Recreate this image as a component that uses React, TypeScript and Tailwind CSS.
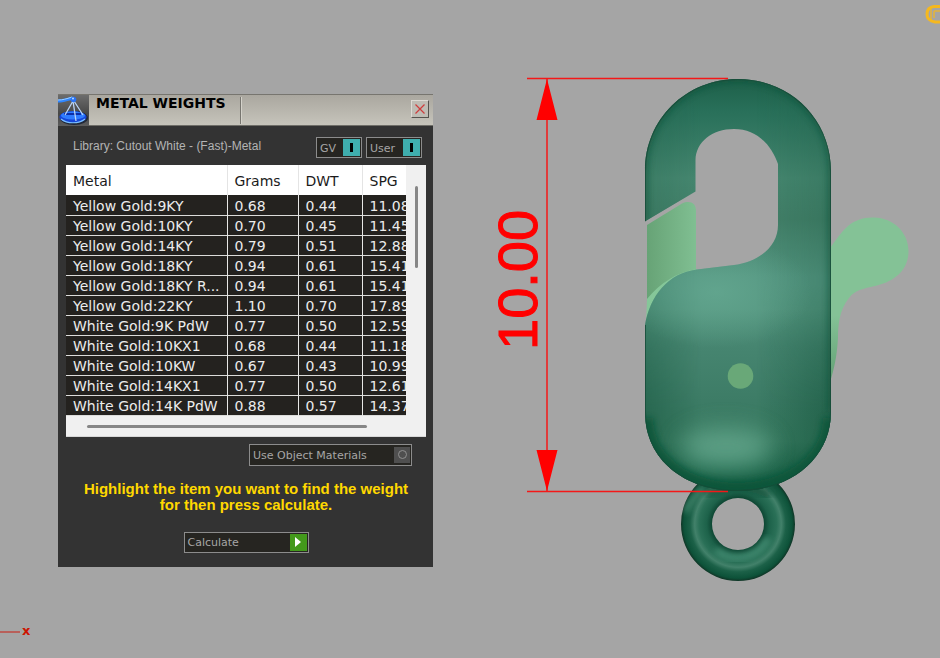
import type { ReactNode } from "react";

type Metal = {
  name: string;
  grams: string;
  dwt: string;
  spg: string;
};

const metals: Metal[] = [
  { name: "Yellow Gold:9KY", grams: "0.68", dwt: "0.44", spg: "11.08" },
  { name: "Yellow Gold:10KY", grams: "0.70", dwt: "0.45", spg: "11.45" },
  { name: "Yellow Gold:14KY", grams: "0.79", dwt: "0.51", spg: "12.88" },
  { name: "Yellow Gold:18KY", grams: "0.94", dwt: "0.61", spg: "15.41" },
  { name: "Yellow Gold:18KY R...", grams: "0.94", dwt: "0.61", spg: "15.41" },
  { name: "Yellow Gold:22KY", grams: "1.10", dwt: "0.70", spg: "17.89" },
  { name: "White Gold:9K PdW", grams: "0.77", dwt: "0.50", spg: "12.59" },
  { name: "White Gold:10KX1", grams: "0.68", dwt: "0.44", spg: "11.18" },
  { name: "White Gold:10KW", grams: "0.67", dwt: "0.43", spg: "10.99" },
  { name: "White Gold:14KX1", grams: "0.77", dwt: "0.50", spg: "12.61" },
  { name: "White Gold:14K PdW", grams: "0.88", dwt: "0.57", spg: "14.37" },
];

function ScaleLogo() {
  return (
    <svg viewBox="0 0 31 31" className="h-[31px] w-[31px] shrink-0" aria-hidden="true">
      <defs>
        <linearGradient id="logoBg" x1="0" y1="0" x2="0" y2="1">
          <stop offset="0" stopColor="#6c6c6c" />
          <stop offset="0.6" stopColor="#474747" />
          <stop offset="1" stopColor="#5c5c5c" />
        </linearGradient>
      </defs>
      <rect width="31" height="31" fill="url(#logoBg)" />
      <ellipse cx="16" cy="23" rx="14" ry="7" fill="#202838" />
      <ellipse cx="15" cy="22" rx="13.5" ry="6" fill="#1646d8" />
      <ellipse cx="15" cy="20.5" rx="12" ry="4" fill="#2f7cff" />
      <path d="M3 24c6 5 18 5 24 0" stroke="#7cc0ff" strokeWidth="1.2" fill="none" />
      <path d="M6 19h17" stroke="#0b2ea8" strokeWidth="2" />
      <path d="M15 6L7 20M15 6l3 20M16 6l9 14" stroke="#b9d4f6" strokeWidth="1.3" fill="none" />
      <path d="M0 6c5 0 8-1 15-3" stroke="#2f86ff" strokeWidth="3" fill="none" />
      <path d="M0 5c5 0 8-1 14-3" stroke="#9fd0ff" strokeWidth="1" fill="none" />
      <circle cx="15.5" cy="4.5" r="2.8" fill="#2a72f5" />
      <circle cx="15" cy="3.5" r="1" fill="#b5dcff" />
    </svg>
  );
}

type BoxButtonProps = {
  label: string;
  className: string;
  pressed?: boolean;
  children: ReactNode;
};

function BoxButton({ label, className, pressed, children }: BoxButtonProps) {
  return (
    <button
      type="button"
      aria-pressed={pressed}
      className={`flex items-center justify-between border border-[#8c8c8c] bg-[#262521] pl-[3px] pr-px text-[11px] leading-4 text-[#a6a6a6] ${className}`}
    >
      <span className="pt-[2px]">{label}</span>
      {children}
    </button>
  );
}

function OnMark() {
  return (
    <span className="flex h-[17px] w-[17px] items-center justify-center bg-[#3faeae]">
      <span className="h-[9px] w-[3px] bg-black" />
    </span>
  );
}

function MetalTable() {
  return (
    <div className="mt-[7px] border-b border-[#d8d8d8] bg-[#f0f0f0]">
      <div className="flex">
        <div className="min-w-0 flex-1 overflow-hidden">
          <table className="w-[384px] table-fixed border-collapse text-[14px]">
            <colgroup>
              <col className="w-[161px]" />
              <col className="w-[71px]" />
              <col className="w-[64px]" />
              <col />
            </colgroup>
            <thead>
              <tr className="h-[30px] bg-white leading-4 text-[#1b1b1b]">
                <th className="border-r border-[#e4e4e4] pl-[7px] pt-[2px] text-left font-normal">Metal</th>
                <th className="border-r border-[#e4e4e4] pl-[7px] pt-[2px] text-left font-normal">Grams</th>
                <th className="border-r border-[#e4e4e4] pl-[7px] pt-[2px] text-left font-normal">DWT</th>
                <th className="pl-[7px] pt-[2px] text-left font-normal">SPG</th>
              </tr>
            </thead>
            <tbody>
              {metals.map((m) => (
                <tr key={m.name} className="h-5 border-b border-[#dcdcda] bg-[#24221f] leading-4 text-[#ececec]">
                  <td className="whitespace-nowrap border-r border-[#e8e8e6] pl-[7px] pt-[2px]">{m.name}</td>
                  <td className="border-r border-[#e8e8e6] pl-[7px] pt-[2px]">{m.grams}</td>
                  <td className="border-r border-[#e8e8e6] pl-[7px] pt-[2px]">{m.dwt}</td>
                  <td className="pl-[7px] pt-[2px]">{m.spg}</td>
                </tr>
              ))}
            </tbody>
          </table>
        </div>
        <div className="flex w-5 justify-center pt-[21px]">
          <div className="h-[82px] w-[3px] rounded-full bg-[#868686]" />
        </div>
      </div>
      <div className="h-5 pl-[21px] pt-[9px]">
        <div className="h-[3px] w-[280px] rounded-full bg-[#868686]" />
      </div>
    </div>
  );
}

function MetalWeights() {
  return (
    <section className="ml-[58px] mt-[94px] w-[375px] shrink-0 self-start bg-[#333333]">
      <header className="flex h-8 items-start border-b border-t border-b-[#6f6e68] border-t-[#77756f] bg-linear-to-b from-[#aaa79f] to-[#c6c4bb]">
        <ScaleLogo />
        <h1 className="whitespace-nowrap pl-[7px] text-[14px] font-bold leading-4 text-black">METAL WEIGHTS</h1>
        <div className="ml-[14px] mt-[2px] h-[27px] w-[2px] border-l border-r border-l-[#77756f] border-r-[#d4d2ca]" />
        <button
          type="button"
          aria-label="Close"
          className="ml-auto mr-[4px] mt-[5px] flex h-[18px] w-[18px] items-center justify-center border border-b-[#55534e] border-l-[#dddbd4] border-r-[#55534e] border-t-[#dddbd4] bg-[#bfbcb4]"
        >
          <svg viewBox="0 0 10 10" className="h-[10px] w-[10px]" aria-hidden="true">
            <path d="M0.5 0.5l9 9M9.5 0.5l-9 9" stroke="#d03c3c" strokeWidth="1.2" />
          </svg>
        </button>
      </header>

      <div className="pb-[14px] pl-2 pr-[7px] pt-[11px]">
        <div className="flex items-start gap-1 pl-[7px] pr-1">
          <p className="mr-auto whitespace-nowrap pt-px font-['Liberation_Sans'] text-xs leading-4 text-[#b4b4b4]">
            Library: Cutout White - (Fast)-Metal
          </p>
          <BoxButton label="GV" pressed className="h-[21px] w-[46px]">
            <OnMark />
          </BoxButton>
          <BoxButton label="User" pressed className="h-[21px] w-[56px]">
            <OnMark />
          </BoxButton>
        </div>

        <MetalTable />

        <div className="mt-[7px] flex justify-end pr-[14px]">
          <BoxButton label="Use Object Materials" pressed={false} className="h-[22px] w-[163px]">
            <span className="flex h-4 w-4 items-center justify-center bg-[#4f4f4f]">
              <span className="h-[9px] w-[9px] rounded-full border border-[#909090]" />
            </span>
          </BoxButton>
        </div>

        <p className="mt-[15px] text-center font-['Liberation_Sans'] text-[15px] font-bold leading-4 text-[#ffd800]">
          Highlight the item you want to find the weight
          <br />
          for then press calculate.
        </p>

        <div className="mt-[19px] flex justify-center">
          <BoxButton label="Calculate" className="h-[21px] w-[125px]">
            <span className="flex h-[17px] w-[17px] items-center justify-center bg-[#43991b]">
              <svg viewBox="0 0 6 10" className="h-[10px] w-[6px]" aria-hidden="true">
                <path d="M0 0l6 5-6 5z" fill="#fff" />
              </svg>
            </span>
          </BoxButton>
        </div>
      </div>
    </section>
  );
}

const BODY =
  "M645 221.5L695.5 191.5V160C696 142 712 129 734 129C756 129 771 144 778 164V225C778 247 758 262 734 265L697 269.5C668 273 650 296 645 325V412C645 460 685 491 738 491C791 491 831 458 831 412V171C831 119 790 79 738 79C686 79 645 119 645 171Z";

function ClaspModel() {
  return (
    <svg
      viewBox="433 0 507 600"
      preserveAspectRatio="xMinYMin meet"
      className="h-[600px] min-w-0 flex-1"
      role="img"
      aria-label="Lobster clasp with height dimension"
    >
      <defs>
        <linearGradient id="body" gradientUnits="userSpaceOnUse" x1="0" y1="79" x2="0" y2="491">
          <stop offset="0" stopColor="#1d6049" />
          <stop offset="0.08" stopColor="#29705a" />
          <stop offset="0.24" stopColor="#468770" />
          <stop offset="0.34" stopColor="#438069" />
          <stop offset="0.48" stopColor="#549580" />
          <stop offset="0.56" stopColor="#54957f" />
          <stop offset="0.65" stopColor="#468570" />
          <stop offset="0.78" stopColor="#3d7c66" />
          <stop offset="0.88" stopColor="#387a60" />
          <stop offset="0.95" stopColor="#1e664b" />
          <stop offset="1" stopColor="#0a5238" />
        </linearGradient>
        <linearGradient id="side" gradientUnits="userSpaceOnUse" x1="645" y1="0" x2="831" y2="0">
          <stop offset="0" stopColor="#14543c" stopOpacity="0.5" />
          <stop offset="0.3" stopColor="#14543c" stopOpacity="0" />
          <stop offset="0.6" stopColor="#14543c" stopOpacity="0" />
          <stop offset="1" stopColor="#14543c" stopOpacity="0.6" />
        </linearGradient>
        <linearGradient id="fade" x1="0" y1="0" x2="0" y2="1">
          <stop offset="0" stopColor="#fff" stopOpacity="0.4" />
          <stop offset="0.5" stopColor="#fff" stopOpacity="0.4" />
          <stop offset="0.8" stopColor="#fff" />
        </linearGradient>
        <mask id="sideMask">
          <rect x="645" y="79" width="186" height="412" fill="url(#fade)" />
        </mask>
        <radialGradient id="glow">
          <stop offset="0" stopColor="#6bb098" stopOpacity="0.8" />
          <stop offset="1" stopColor="#6bb098" stopOpacity="0" />
        </radialGradient>
        <linearGradient id="gate" x1="0" y1="0" x2="1" y2="0">
          <stop offset="0" stopColor="#67a376" />
          <stop offset="1" stopColor="#80bf92" />
        </linearGradient>
        <linearGradient id="lever" x1="0" y1="0" x2="0" y2="1">
          <stop offset="0.6" stopColor="#84c296" />
          <stop offset="1" stopColor="#63a074" />
        </linearGradient>
        <radialGradient id="ring" gradientUnits="userSpaceOnUse" cx="738" cy="524" r="57">
          <stop offset="0.45" stopColor="#0d4532" />
          <stop offset="0.55" stopColor="#1d624a" />
          <stop offset="0.68" stopColor="#2a7057" />
          <stop offset="0.76" stopColor="#42816a" />
          <stop offset="0.84" stopColor="#1c6148" />
          <stop offset="0.95" stopColor="#0d5239" />
          <stop offset="1" stopColor="#103526" />
        </radialGradient>
        <filter id="soft" x="-20%" y="-20%" width="140%" height="140%">
          <feGaussianBlur stdDeviation="3" />
        </filter>
        <filter id="softer" x="-60%" y="-90%" width="220%" height="280%">
          <feGaussianBlur stdDeviation="12" />
        </filter>
        <clipPath id="bodyClip">
          <path d={BODY} />
        </clipPath>
        <clipPath id="ringClip">
          <path
            clipRule="evenodd"
            d="M681 524a57 57 0 1 0 114 0a57 57 0 1 0-114 0ZM712 524a26 26 0 1 0 52 0a26 26 0 1 0-52 0Z"
          />
        </clipPath>
      </defs>

      {/* jump ring */}
      <g clipPath="url(#ringClip)">
        <rect x="681" y="467" width="114" height="114" fill="url(#ring)" />
        <path d="M716 550A34 34 0 0 0 768 538" stroke="#57a086" strokeWidth="6" fill="none" opacity="0.7" filter="url(#soft)" />
        <path d="M685 512C691 500 697 493 704 488" stroke="#5c9c84" strokeWidth="7" fill="none" opacity="0.6" filter="url(#soft)" />
        <path d="M706 494C722 484 754 484 770 496" stroke="#0a4630" strokeWidth="8" fill="none" opacity="0.6" filter="url(#soft)" />
      </g>

      {/* lever and gate */}
      <path
        d="M830 248C836 240 841 232 848 226C855 220 864 217 874 217.5C894 218 909 233 908.5 252C908 270 895 281 877 285.5C862 289 855 290 849 298C839 310 838 326 838 338C837 356 834 370 830 382Z"
        fill="url(#lever)"
      />
      <path d="M647 225L682 203.5C690 200 696 203 696 211V272L647 320Z" fill="url(#gate)" />
      <path d="M647 299C660 283 677 272 697 269V275L655 305L646 325Z" fill="#85c799" />

      {/* clasp body */}
      <path d={BODY} fill="url(#body)" />
      <g clipPath="url(#bodyClip)">
        <rect x="645" y="79" width="186" height="412" fill="url(#side)" mask="url(#sideMask)" />
        <ellipse cx="716" cy="292" rx="96" ry="56" fill="url(#glow)" opacity="0.7" />
        <ellipse cx="726" cy="448" rx="46" ry="20" fill="#66a98f" opacity="0.8" filter="url(#softer)" />
        <path
          d="M645 418C645 460 685 491 738 491C791 491 831 458 831 418"
          fill="none"
          stroke="#08563a"
          strokeWidth="17"
          opacity="0.9"
          filter="url(#soft)"
        />
        <path
          d="M645 222V171C645 119 686 79 738 79C790 79 831 119 831 171V412"
          fill="none"
          stroke="#0b5037"
          strokeWidth="6"
          opacity="0.6"
          filter="url(#soft)"
        />
        <path
          d="M645 222V171C645 119 686 79 738 79C790 79 831 119 831 171V412C831 458 791 491 738 491C685 491 645 460 645 412V325"
          fill="none"
          stroke="#174b38"
          strokeWidth="2"
          opacity="0.8"
        />
      </g>
      <path d="M645 223.2L684 200" stroke="#a5a5a5" strokeWidth="2" />
      <circle cx="740.5" cy="376" r="12.8" fill="#69a878" />

      {/* dimension */}
      <g stroke="#f41818" strokeWidth="1.5">
        <path d="M527 78.5H728" />
        <path d="M527 491.5H728" />
        <path d="M547 79V491" />
      </g>
      <path d="M547 79l10.5 41h-21zM547 491l10.5-41h-21z" fill="#ff0000" />
      <text
        transform="translate(537 350) rotate(-90)"
        fontFamily="Liberation Sans, Arial, sans-serif"
        fontSize="56"
        fill="#ff0000"
        stroke="#ff0000"
      >
        10.00
      </text>
    </svg>
  );
}

export default function App() {
  return (
    <main className="relative flex min-h-screen flex-col overflow-hidden bg-[#a5a5a5] font-['DejaVu_Sans',Verdana,sans-serif]">
      <div className="flex">
        <MetalWeights />
        <ClaspModel />
      </div>

      <footer className="flex h-[58px] items-start gap-[2px] pt-[23px]">
        <div className="mt-2 h-[2px] w-5 bg-[#b8605a]" />
        <span className="text-[13px] font-bold leading-4 text-[#cc1400]">x</span>
      </footer>

      <svg viewBox="0 0 16 24" className="absolute right-0 top-0 h-6 w-4" aria-hidden="true">
        <g fill="none" stroke="#f5b81e">
          <path d="M16 6.500H10C5 7 3 10 3 14.500S6 21 11 22H16" strokeWidth="3" />
          <path d="M7 7V21M10 11V18M10 11H16" strokeWidth="1.5" opacity="0.8" />
        </g>
      </svg>
    </main>
  );
}
